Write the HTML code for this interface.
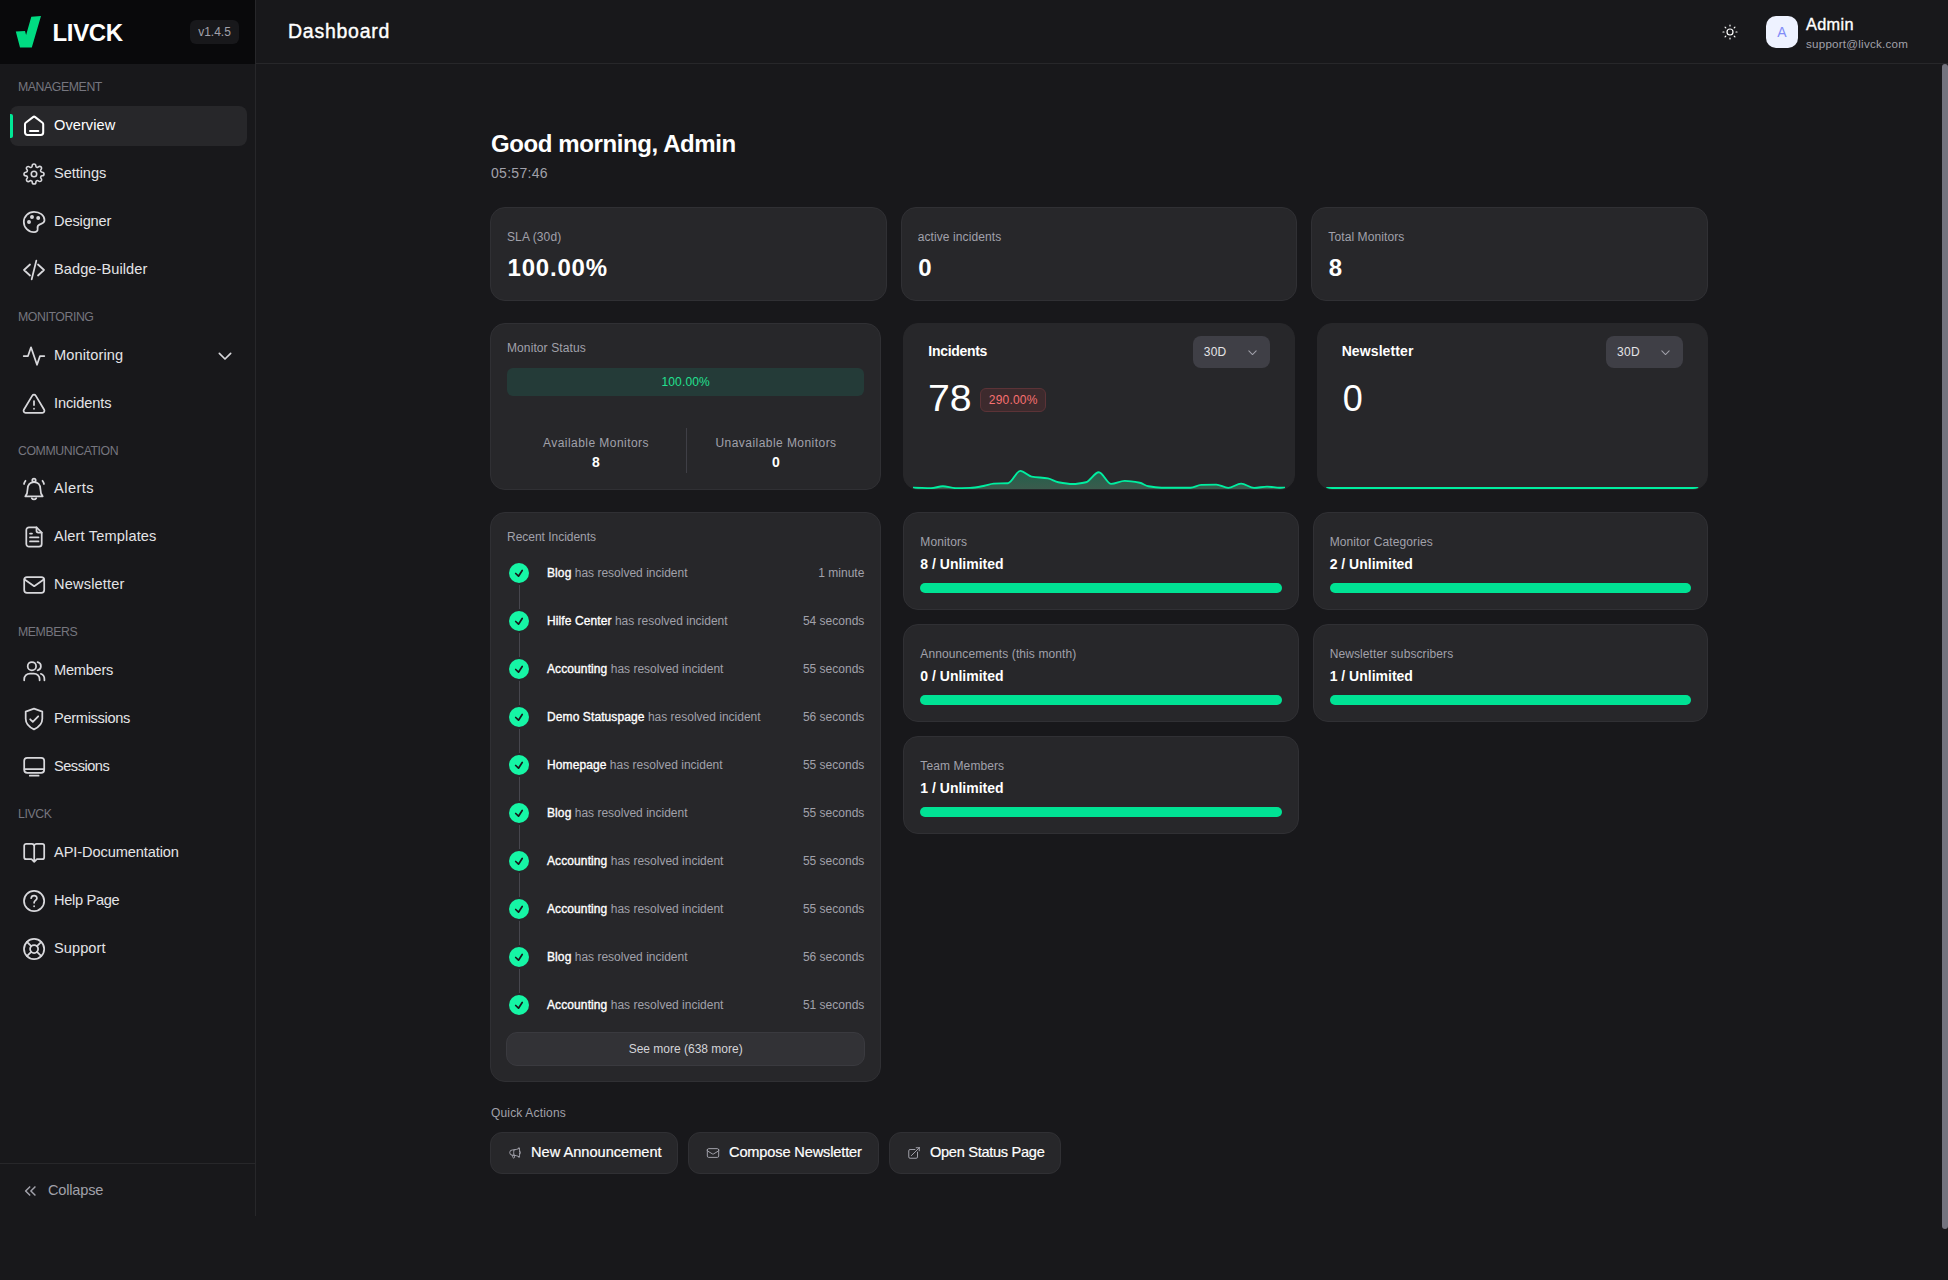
<!DOCTYPE html>
<html lang="en">
<head>
<meta charset="utf-8">
<title>LIVCK – Dashboard</title>
<style>
*{box-sizing:border-box;margin:0;padding:0}
html,body{width:1948px;height:1280px;overflow:hidden;background:#18181b}
body{position:relative;font-family:"Liberation Sans",Arial,sans-serif;color:#fff;-webkit-font-smoothing:antialiased}
svg{display:block}
.ico{width:24px;height:24px;fill:none;stroke:currentColor;stroke-width:1.75;stroke-linecap:round;stroke-linejoin:round;flex:none}

/* ---------- sidebar ---------- */
.sidebar{position:absolute;left:0;top:0;width:256px;height:1216px;border-right:1px solid #27272a;background:#18181b}
.brand{position:absolute;left:0;top:0;width:255px;height:64px;background:#09090b}
.brand .mark{position:absolute;left:0;top:0;width:64px;height:64px}
.brand .name{position:absolute;left:52.500px;top:18px;font-size:24px;line-height:30px;font-weight:700;letter-spacing:-.35px;color:#fff}
.brand .ver{position:absolute;left:190px;top:20px;width:49px;height:24px;border-radius:6px;background:#18181b;color:#a1a1aa;font-size:12px;line-height:24px;text-align:center}
.nav{position:absolute;left:0;top:64px;width:255px}
.nav h6{position:absolute;left:18px;font-size:12.300px;line-height:16px;font-weight:400;color:#76767f;letter-spacing:-.42px;margin-top:.7px;white-space:nowrap}
.nav a{position:absolute;left:10px;width:237px;height:40px;border-radius:8px;display:flex;align-items:center;padding-left:12px;color:#e4e4e7;font-size:14.6px;text-decoration:none;white-space:nowrap}
.nav a span{margin-left:8px;position:relative;top:-1px}
.nav a.active{background:#27272a;color:#fff}
.nav a>svg:first-child{color:#d8d8dc}
.nav a.active>svg:first-child{color:#fff}
.nav a.active:before{content:"";position:absolute;left:0;top:8px;width:3px;height:24px;border-radius:0 2px 2px 0;background:#00e896}
.nav a .chev{position:absolute;right:14px;top:12.200px;width:16px;height:16px;stroke-width:2.500;color:#d8d8dc}
.collapse{position:absolute;left:0;top:1163px;width:255px;height:53px;border-top:1px solid #27272a;color:#a1a1aa;font-size:14.6px}
.collapse svg{position:absolute;left:22.500px;top:19.500px;width:14px;height:14px;stroke-width:2.600}
.collapse span{position:absolute;left:48px;top:17px;line-height:18px;letter-spacing:-.2px}

/* ---------- topbar ---------- */
.topbar{position:absolute;left:256px;top:0;width:1692px;height:64px;border-bottom:1px solid #27272a}
.topbar h1{position:absolute;left:32px;top:19.400px;font-size:19.500px;line-height:24px;font-weight:400;color:#fff;-webkit-text-stroke:.4px #fff;letter-spacing:.75px}
.topbar .sun{position:absolute;left:1466px;top:24px;width:16px;height:16px;stroke-width:1.8}
.avatar{position:absolute;left:1510px;top:16px;width:32px;height:32px;border-radius:10px;background:#eef2ff;color:#818cf8;font-size:14px;line-height:32px;text-align:center}
.uname{position:absolute;left:1550px;top:14.500px;font-size:16.3px;line-height:18px;color:#fff;-webkit-text-stroke:.35px #fff;letter-spacing:.35px}
.umail{position:absolute;left:1550px;top:37px;font-size:11.6px;line-height:14px;color:#a1a1aa;letter-spacing:.23px}
.scroll{position:absolute;left:1942px;top:64px;width:6px;height:1165px;border-radius:3px;background:#73737e}

/* ---------- main ---------- */
.main{position:absolute;left:0;top:0;width:1948px;height:1280px;pointer-events:none}

.main .greet{position:absolute;left:491px;top:128px;font-size:24px;line-height:32px;font-weight:700;color:#fff;white-space:nowrap;letter-spacing:-.4px}
.main .clock{position:absolute;left:491px;top:164px;font-size:14px;line-height:18px;color:#a1a1aa;letter-spacing:.3px}
.card{position:absolute;background:#27272a;border:1px solid #303034;border-radius:15px}
.card .lbl{position:absolute;left:16px;font-size:12px;line-height:16px;color:#a1a1aa;white-space:nowrap;letter-spacing:.1px}
.card .big{position:absolute;left:16.500px;top:44px;font-size:24px;line-height:32px;font-weight:700;color:#fff;white-space:nowrap;letter-spacing:.8px}
.card .val{position:absolute;left:16px;top:41px;font-size:14px;line-height:20px;font-weight:700;color:#fff;white-space:nowrap}
.card .bar{position:absolute;left:16px;right:16px;top:70px;height:10px;border-radius:5px;background:#00e294}
.stat{top:207px;height:94px}
.stat .lbl{top:21px}
.use{height:98px}
.use .lbl{top:21px}
/* monitor status */
.ms .lbl{top:16px}
.ms .pbar{position:absolute;left:16px;right:16px;top:44px;height:28px;border-radius:6px;background:#243b38;color:#22e090;letter-spacing:.15px;font-size:12px;line-height:28px;text-align:center}
.ms .col{position:absolute;top:111px;width:178px;text-align:center}
.ms .col i{display:block;font-style:normal;font-size:12px;line-height:16px;color:#a1a1aa;letter-spacing:.45px}
.ms .col b{display:block;font-size:14px;line-height:20px;font-weight:700;color:#fff;margin-top:1px}
.ms .sep{position:absolute;left:195px;top:104px;width:1px;height:45px;background:#3f3f46}
/* chart cards */
.cc{border-color:#27272a;overflow:hidden}
.cc h3{position:absolute;left:24px;top:17px;font-size:14px;line-height:20px;font-weight:700;color:#fff;letter-spacing:-.3px}
.cc .sel{position:absolute;right:24px;top:12px;width:77px;letter-spacing:.3px;height:32px;border-radius:8px;background:#3f3f46;color:#e4e4e7;font-size:12px;line-height:32px;padding-left:11px}
.cc .sel svg{position:absolute;right:12px;top:10.500px;width:11px;height:11px;stroke:#a1a1aa;stroke-width:2.2}
.cc .num{position:absolute;left:24px;top:52.500px;font-size:36px;line-height:44px;font-weight:400;color:#fff;transform-origin:0 50%}
.cc .badge{position:absolute;left:76px;top:64px;height:24px;padding:0 7.500px;letter-spacing:.2px;border-radius:6px;border:1px solid #5c3337;background:#3d2a2d;color:#f87171;font-size:12px;line-height:22px}
.cc svg.spark{position:absolute;left:8.500px;top:0;width:372.500px;height:166px;overflow:hidden}
/* incidents list */
.ri .lbl{top:16px}
.ri .row{position:absolute;left:16px;right:16px;height:20px;font-size:12px;line-height:20px;color:#a1a1aa;white-space:nowrap}
.ri .row .dot{position:absolute;left:2px;top:0;width:20px;height:20px;border-radius:50%;background:#16f5a5}
.ri .row .dot svg{width:20px;height:20px;fill:none;stroke:#18181b;stroke-width:1.7;stroke-linecap:round;stroke-linejoin:round}
.ri .row .tx{position:absolute;left:40px;top:0}
.ri .row .tx b{color:#fff;font-weight:400;-webkit-text-stroke:.35px #fff;letter-spacing:.1px}
.ri .row .tm{position:absolute;right:0;top:0}
.ri .row .ln{position:absolute;left:11.500px;top:22px;width:1.500px;height:24px;background:#46464d}
.ri .more{position:absolute;left:15px;right:15px;top:519px;height:34px;border-radius:11px;border:1px solid #3a3a3f;background:#323236;color:#d4d4d8;font-size:12px;line-height:32px;text-align:center}
.qa{position:absolute;left:491px;top:1105px;font-size:12px;line-height:16px;color:#a1a1aa;letter-spacing:.17px}
.btn{position:absolute;top:1132px;height:42px;border-radius:12px;border:1px solid #303034;background:#27272a;color:#fff;font-size:14.6px;line-height:39px;padding-left:40px;white-space:nowrap;-webkit-text-stroke:.2px #fff}
.btn svg{position:absolute;left:17px;top:13px;width:14px;height:14px;fill:none;stroke:#a1a1aa;stroke-width:1.7;stroke-linecap:round;stroke-linejoin:round}
</style>
</head>
<body>

<aside class="sidebar">
  <div class="brand">
    <svg class="mark" viewBox="0 0 64 64"><polygon points="31.3,16.8 41,16 31.8,47.6 20,47.6 15.8,31.6 25,31 26.1,35" fill="#00dc82"/></svg>
    <div class="name">LIVCK</div>
    <div class="ver">v1.4.5</div>
  </div>
  <nav class="nav">
    <h6 style="top:14px">MANAGEMENT</h6>
    <a class="active" style="top:42px"><svg class="ico" viewBox="0 0 24 24" style="stroke-width:2.05"><path d="M3 10.200a1.800 1.800 0 0 1 .7-1.400l7.300-5.700a1.800 1.800 0 0 1 2.200 0l7.300 5.700a1.800 1.800 0 0 1 .7 1.400v8.400a2.400 2.400 0 0 1-2.400 2.400H5.400A2.400 2.400 0 0 1 3 18.600z"/><path d="M8 17h8.300"/></svg><span style="letter-spacing:0.06px">Overview</span></a>
    <a style="top:90px"><svg class="ico" viewBox="0 0 24 24"><g transform="translate(12 12) scale(.91) translate(-12 -12)" stroke-width="1.75"><circle cx="12" cy="12" r="3"/><path d="M19.4 15a1.650 1.650 0 0 0 .33 1.820l.06.06a2 2 0 0 1 0 2.830 2 2 0 0 1-2.830 0l-.06-.06a1.650 1.650 0 0 0-1.820-.33 1.650 1.650 0 0 0-1 1.510V21a2 2 0 0 1-2 2 2 2 0 0 1-2-2v-.09A1.650 1.650 0 0 0 9 19.4a1.650 1.650 0 0 0-1.820.33l-.06.06a2 2 0 0 1-2.830 0 2 2 0 0 1 0-2.830l.06-.06a1.650 1.650 0 0 0 .33-1.820 1.650 1.650 0 0 0-1.510-1H3a2 2 0 0 1-2-2 2 2 0 0 1 2-2h.09A1.650 1.650 0 0 0 4.600 9a1.650 1.650 0 0 0-.33-1.820l-.06-.06a2 2 0 0 1 0-2.830 2 2 0 0 1 2.830 0l.06.06a1.650 1.650 0 0 0 1.820.33H9a1.650 1.650 0 0 0 1-1.510V3a2 2 0 0 1 2-2 2 2 0 0 1 2 2v.09a1.650 1.650 0 0 0 1 1.510 1.650 1.650 0 0 0 1.820-.33l.06-.06a2 2 0 0 1 2.830 0 2 2 0 0 1 0 2.830l-.06.06a1.650 1.650 0 0 0-.33 1.820V9a1.650 1.650 0 0 0 1.510 1H21a2 2 0 0 1 2 2 2 2 0 0 1-2 2h-.09a1.650 1.650 0 0 0-1.510 1z"/></g></svg><span style="letter-spacing:-0.07px">Settings</span></a>
    <a style="top:138px"><svg class="ico" viewBox="0 0 24 24"><path d="M12 1.800C6.300 1.800 1.800 6.400 1.800 12S6.400 22.200 12 22.200c2.700 0 3.900-1.500 3.600-3.400-.4-2.200.3-3.600 2.200-4.400 2.300-.9 4.700-1.400 4.700-4.200C22.500 5.300 17.800 1.800 12 1.800Z"/><circle cx="10" cy="7" r="1.100" fill="currentColor"/><circle cx="16.200" cy="8" r="1.100" fill="currentColor"/><circle cx="7" cy="12" r="1.100" fill="currentColor"/></svg><span style="letter-spacing:-0.14px">Designer</span></a>
    <a style="top:186px"><svg class="ico" viewBox="0 0 24 24"><path d="M8 6.500 2 12l6 5.500M16 6.500 22 12l-6 5.500M14.300 2.700 9.700 21.300"/></svg><span style="letter-spacing:0.07px">Badge-Builder</span></a>

    <h6 style="top:244px">MONITORING</h6>
    <a style="top:272px"><svg class="ico" viewBox="0 0 24 24"><path d="M1.700 12H6l3-8.700L15 20.800 18 12h4.300"/></svg><span style="letter-spacing:0.12px">Monitoring</span><svg class="ico chev" viewBox="0 0 24 24"><path d="m3.500 8 8.500 8.500L20.500 8"/></svg></a>
    <a style="top:320px"><svg class="ico" viewBox="0 0 24 24"><g transform="translate(0 -.2)"><path d="M10.290 3.860 1.820 18a2 2 0 0 0 1.710 3h16.940a2 2 0 0 0 1.710-3L13.710 3.860a2 2 0 0 0-3.420 0z"/><path d="M12 9.200v4.100M12 16.900v.1"/></g></svg><span style="letter-spacing:-0.12px">Incidents</span></a>

    <h6 style="top:378px">COMMUNICATION</h6>
    <a style="top:405px"><svg class="ico" viewBox="0 0 24 24"><circle cx="12" cy="3.300" r="1.700"/><path d="M3.300 19.300h17.400c-1.800-2-2.300-4.300-2.300-7.300 0-4.300-2.600-7-6.400-7s-6.400 2.700-6.400 7c0 3-.5 5.300-2.300 7.300Z"/><path d="M9.800 21.200c.5.800 1.300 1.200 2.200 1.200s1.700-.4 2.200-1.200"/><path d="M3.500 3.800C2.700 4.700 2.200 5.800 2 7M20.500 3.800c.8.900 1.300 2 1.500 3.200"/></svg><span style="letter-spacing:0.47px">Alerts</span></a>
    <a style="top:453px"><svg class="ico" viewBox="0 0 24 24"><path d="M14.500 2.300H7A2.700 2.700 0 0 0 4.300 5v14A2.700 2.700 0 0 0 7 21.700h10a2.700 2.700 0 0 0 2.700-2.700V7.500Z"/><path d="M14.500 2.300v3.500a1.700 1.700 0 0 0 1.700 1.700h3.500"/><path d="M8 8.600h2M8 12.400h8.500M8 16.400h8.500"/></svg><span style="letter-spacing:0.15px">Alert Templates</span></a>
    <a style="top:501px"><svg class="ico" viewBox="0 0 24 24"><rect x="2.200" y="4" width="20" height="15.800" rx="2.800"/><path d="m2.600 6.500 9.600 6.700 9.600-6.700"/></svg><span style="letter-spacing:0.17px">Newsletter</span></a>

    <h6 style="top:559px">MEMBERS</h6>
    <a style="top:587px"><svg class="ico" viewBox="0 0 24 24"><circle cx="9.900" cy="7.200" r="4.200"/><path d="M2.200 21.300v-1a5.800 5.800 0 0 1 5.800-5.800h3.800a5.800 5.800 0 0 1 5.800 5.800v1"/><path d="M15.600 3.100a4.200 4.200 0 0 1 0 8.200"/><path d="M18.800 14.800a5.600 5.600 0 0 1 3.600 5.500v1"/></svg><span style="letter-spacing:-0.25px">Members</span></a>
    <a style="top:635px"><svg class="ico" viewBox="0 0 24 24"><path d="M12 1.700 20.300 4.600v7.200c0 5-3.600 8.400-8.300 10.600-4.700-2.200-8.300-5.600-8.300-10.600V4.600Z"/><path d="m8.200 12.300 2.600 2.600 5.400-5.600"/></svg><span style="letter-spacing:-0.31px">Permissions</span></a>
    <a style="top:683px"><svg class="ico" viewBox="0 0 24 24"><rect x="2.200" y="2.800" width="20" height="15" rx="3"/><path d="M2.500 14.100h19.400M7.800 20.700h8.800"/></svg><span style="letter-spacing:-0.49px">Sessions</span></a>

    <h6 style="top:741px">LIVCK</h6>
    <a style="top:769px"><svg class="ico" viewBox="0 0 24 24"><path d="M12.200 20.800V5.200a2.400 2.400 0 0 0-2.400-2.400H4.200a2 2 0 0 0-2 2v11.400a2 2 0 0 0 2 2h5.300l2.700 2.600 2.700-2.600h5.300a2 2 0 0 0 2-2V4.800a2 2 0 0 0-2-2h-5.600a2.400 2.400 0 0 0-2.400 2.400"/></svg><span style="letter-spacing:-0.10px">API-Documentation</span></a>
    <a style="top:817px"><svg class="ico" viewBox="0 0 24 24"><circle cx="12.100" cy="11.900" r="10.100"/><path d="M9.200 9.200c.2-3.600 5.800-3.500 5.700 0-.1 2.300-2.800 2.200-2.800 4.600M12.100 17.200v.1"/></svg><span style="letter-spacing:-0.31px">Help Page</span></a>
    <a style="top:865px"><svg class="ico" viewBox="0 0 24 24"><circle cx="12.100" cy="12" r="10.100"/><circle cx="12.100" cy="12" r="4"/><path d="m4.900 4.900 4.300 4.300M19.300 4.900 15 9.200M4.900 19.100l4.300-4.300M19.300 19.100 15 14.800"/></svg><span style="letter-spacing:0.07px">Support</span></a>
  </nav>
  <div class="collapse"><svg class="ico" viewBox="0 0 24 24"><path d="m11.500 5-7 7 7 7M20.500 5l-7 7 7 7"/></svg><span>Collapse</span></div>
</aside>

<header class="topbar">
  <h1>Dashboard</h1>
  <svg class="ico sun" viewBox="0 0 24 24"><circle cx="12" cy="12" r="4.500"/><path d="M12 1.500v1.500M12 21v1.500M1.500 12H3M21 12h1.500M4.600 4.600l1.100 1.100M18.300 18.300l1.100 1.100M4.600 19.400l1.100-1.100M18.300 5.700l1.100-1.100"/></svg>
  <div class="avatar">A</div>
  <div class="uname">Admin</div>
  <div class="umail">support@livck.com</div>
</header>
<div class="scroll"></div>

<main class="main">

  <div class="greet">Good morning, Admin</div>
  <div class="clock">05:57:46</div>

  <section class="card stat" style="left:490px;width:396.670px"><div class="lbl">SLA (30d)</div><div class="big">100.00%</div></section>
  <section class="card stat" style="left:900.670px;width:396.670px"><div class="lbl">active incidents</div><div class="big">0</div></section>
  <section class="card stat" style="left:1311.330px;width:396.670px"><div class="lbl">Total Monitors</div><div class="big">8</div></section>

  <section class="card ms" style="left:490px;top:323px;width:391.330px;height:166.500px">
    <div class="lbl">Monitor Status</div>
    <div class="pbar">100.00%</div>
    <div class="col" style="left:16px"><i>Available Monitors</i><b>8</b></div>
    <div class="sep"></div>
    <div class="col" style="left:196px"><i>Unavailable Monitors</i><b>0</b></div>
  </section>

  <section class="card cc" style="left:903.330px;top:323px;width:391.330px;height:166.500px">
    <h3>Incidents</h3>
    <div class="sel">30D<svg class="ico" viewBox="0 0 24 24"><path d="m4 8.500 8 8 8-8"/></svg></div>
    <div class="num" style="transform:scaleX(1.09)">78</div>
    <div class="badge">290.00%</div>
    <svg class="spark"><defs><linearGradient id="sg" gradientUnits="userSpaceOnUse" x1="0" y1="146" x2="0" y2="166"><stop offset="0" stop-color="rgb(16,240,160)" stop-opacity=".29"/><stop offset="1" stop-color="rgb(117,237,174)" stop-opacity=".26"/></linearGradient></defs><g transform="translate(-8.500 0)"><path d="M0.4 163.8C3.1 163.8 5.8 163.7 8.5 163.7C14.5 163.7 20.5 164.1 26.5 164.1C30.4 164.1 34.3 162.3 38.3 162.3C42.5 162.3 46.8 164.1 51.1 164.1C55.9 164.1 60.7 164.0 65.5 163.9C70.3 163.8 75.1 162.7 79.9 161.8C82.9 161.2 86.0 159.8 89.1 159.6C93.9 159.3 98.7 159.5 103.5 159.2C107.6 159.0 111.7 146.9 115.8 146.9C119.5 146.9 123.3 151.9 127.1 152.6C132.5 153.6 138.0 153.4 143.5 154.4C146.9 155.0 150.3 157.5 153.8 158.2C158.6 159.1 163.4 160.0 168.2 160.0C172.6 160.0 177.0 159.2 181.5 158.2C185.7 157.2 190.0 148.2 194.3 148.2C198.4 148.2 202.5 159.9 206.7 159.9C211.2 159.9 215.7 156.9 220.2 156.9C225.2 156.9 230.2 157.8 235.3 158.8C238.1 159.4 241.0 161.8 243.9 162.3C248.2 163.1 252.5 163.7 256.9 163.7C261.8 163.7 266.7 163.7 271.7 163.7C276.4 163.7 281.2 163.7 286.0 163.7C289.5 163.7 293.1 161.0 296.7 160.9C301.7 160.7 306.7 160.6 311.8 160.6C315.7 160.6 319.7 163.9 323.7 163.9C328.0 163.9 332.3 159.6 336.6 159.6C340.9 159.6 345.2 163.9 349.6 163.9C353.9 163.9 358.2 162.6 362.5 162.6C366.8 162.6 371.1 163.7 375.4 163.7C379.7 163.7 384.0 163.5 388.3 163.4L388.3 170L0.4 170Z" fill="url(#sg)" stroke="none"/><path d="M0.4 163.8C3.1 163.8 5.8 163.7 8.5 163.7C14.5 163.7 20.5 164.1 26.5 164.1C30.4 164.1 34.3 162.3 38.3 162.3C42.5 162.3 46.8 164.1 51.1 164.1C55.9 164.1 60.7 164.0 65.5 163.9C70.3 163.8 75.1 162.7 79.9 161.8C82.9 161.2 86.0 159.8 89.1 159.6C93.9 159.3 98.7 159.5 103.5 159.2C107.6 159.0 111.7 146.9 115.8 146.9C119.5 146.9 123.3 151.9 127.1 152.6C132.5 153.6 138.0 153.4 143.5 154.4C146.9 155.0 150.3 157.5 153.8 158.2C158.6 159.1 163.4 160.0 168.2 160.0C172.6 160.0 177.0 159.2 181.5 158.2C185.7 157.2 190.0 148.2 194.3 148.2C198.4 148.2 202.5 159.9 206.7 159.9C211.2 159.9 215.7 156.9 220.2 156.9C225.2 156.9 230.2 157.8 235.3 158.8C238.1 159.4 241.0 161.8 243.9 162.3C248.2 163.1 252.5 163.7 256.9 163.7C261.8 163.7 266.7 163.7 271.7 163.7C276.4 163.7 281.2 163.7 286.0 163.7C289.5 163.7 293.1 161.0 296.7 160.9C301.7 160.7 306.7 160.6 311.8 160.6C315.7 160.6 319.7 163.9 323.7 163.9C328.0 163.9 332.3 159.6 336.6 159.6C340.9 159.6 345.2 163.9 349.6 163.9C353.9 163.9 358.2 162.6 362.5 162.6C366.8 162.6 371.1 163.7 375.4 163.7C379.7 163.7 384.0 163.5 388.3 163.4" fill="none" stroke="#00eea0" stroke-width="1.9" stroke-linecap="round" stroke-linejoin="round"/></g></svg>
  </section>

  <section class="card cc" style="left:1316.670px;top:323px;width:391.330px;height:166.500px">
    <h3 style="letter-spacing:.1px">Newsletter</h3>
    <div class="sel">30D<svg class="ico" viewBox="0 0 24 24"><path d="m4 8.500 8 8 8-8"/></svg></div>
    <div class="num" style="left:25px">0</div>
    <svg class="spark"><path d="M1 164H371.500" fill="none" stroke="#00eea0" stroke-width="2" stroke-linecap="round"/></svg>
  </section>

  <section class="card ri" style="left:490px;top:512px;width:391.330px;height:569.500px">
    <div class="lbl" style="letter-spacing:-.02px">Recent Incidents</div>
    <div class="row" style="top:50px"><span class="dot"><svg viewBox="0 0 20 20"><path d="m6.700 10.500 2.800 2.700 3.700-5.700"/></svg></span><span class="ln"></span><span class="tx"><b>Blog</b> has resolved incident</span><span class="tm">1 minute</span></div>
    <div class="row" style="top:98px"><span class="dot"><svg viewBox="0 0 20 20"><path d="m6.700 10.500 2.800 2.700 3.700-5.700"/></svg></span><span class="ln"></span><span class="tx"><b>Hilfe Center</b> has resolved incident</span><span class="tm">54 seconds</span></div>
    <div class="row" style="top:146px"><span class="dot"><svg viewBox="0 0 20 20"><path d="m6.700 10.500 2.800 2.700 3.700-5.700"/></svg></span><span class="ln"></span><span class="tx"><b>Accounting</b> has resolved incident</span><span class="tm">55 seconds</span></div>
    <div class="row" style="top:194px"><span class="dot"><svg viewBox="0 0 20 20"><path d="m6.700 10.500 2.800 2.700 3.700-5.700"/></svg></span><span class="ln"></span><span class="tx"><b>Demo Statuspage</b> has resolved incident</span><span class="tm">56 seconds</span></div>
    <div class="row" style="top:242px"><span class="dot"><svg viewBox="0 0 20 20"><path d="m6.700 10.500 2.800 2.700 3.700-5.700"/></svg></span><span class="ln"></span><span class="tx"><b>Homepage</b> has resolved incident</span><span class="tm">55 seconds</span></div>
    <div class="row" style="top:290px"><span class="dot"><svg viewBox="0 0 20 20"><path d="m6.700 10.500 2.800 2.700 3.700-5.700"/></svg></span><span class="ln"></span><span class="tx"><b>Blog</b> has resolved incident</span><span class="tm">55 seconds</span></div>
    <div class="row" style="top:338px"><span class="dot"><svg viewBox="0 0 20 20"><path d="m6.700 10.500 2.800 2.700 3.700-5.700"/></svg></span><span class="ln"></span><span class="tx"><b>Accounting</b> has resolved incident</span><span class="tm">55 seconds</span></div>
    <div class="row" style="top:386px"><span class="dot"><svg viewBox="0 0 20 20"><path d="m6.700 10.500 2.800 2.700 3.700-5.700"/></svg></span><span class="ln"></span><span class="tx"><b>Accounting</b> has resolved incident</span><span class="tm">55 seconds</span></div>
    <div class="row" style="top:434px"><span class="dot"><svg viewBox="0 0 20 20"><path d="m6.700 10.500 2.800 2.700 3.700-5.700"/></svg></span><span class="ln"></span><span class="tx"><b>Blog</b> has resolved incident</span><span class="tm">56 seconds</span></div>
    <div class="row" style="top:482px"><span class="dot"><svg viewBox="0 0 20 20"><path d="m6.700 10.500 2.800 2.700 3.700-5.700"/></svg></span><span class="tx"><b>Accounting</b> has resolved incident</span><span class="tm">51 seconds</span></div>
    <div class="more">See more (638 more)</div>
  </section>

  <section class="card use" style="left:903.330px;top:512px;width:395.330px"><div class="lbl">Monitors</div><div class="val">8 / Unlimited</div><div class="bar"></div></section>
  <section class="card use" style="left:1312.670px;top:512px;width:395.330px"><div class="lbl">Monitor Categories</div><div class="val">2 / Unlimited</div><div class="bar"></div></section>
  <section class="card use" style="left:903.330px;top:624px;width:395.330px"><div class="lbl">Announcements (this month)</div><div class="val">0 / Unlimited</div><div class="bar"></div></section>
  <section class="card use" style="left:1312.670px;top:624px;width:395.330px"><div class="lbl">Newsletter subscribers</div><div class="val">1 / Unlimited</div><div class="bar"></div></section>
  <section class="card use" style="left:903.330px;top:736px;width:395.330px"><div class="lbl">Team Members</div><div class="val">1 / Unlimited</div><div class="bar"></div></section>

  <div class="qa">Quick Actions</div>
  <div class="btn" style="left:490px;width:188px"><svg viewBox="0 0 24 24"><path d="M10.34 15.840c-.688-.06-1.386-.09-2.090-.09H7.500a4.500 4.500 0 1 1 0-9h.75c.704 0 1.402-.03 2.090-.09m0 9.180c.253.962.584 1.892.985 2.783.247.55.06 1.210-.463 1.511l-.657.38c-.551.318-1.260.117-1.527-.461a20.845 20.845 0 0 1-1.440-4.282m3.102.069a18.030 18.030 0 0 1-.59-4.590c0-1.586.205-3.124.59-4.590m0 9.180a23.848 23.848 0 0 1 8.835 2.535M10.340 6.660a23.847 23.847 0 0 0 8.835-2.535m0 0A23.740 23.740 0 0 0 18.795 3m.38 1.125a23.910 23.910 0 0 1 1.014 5.395m-1.014 8.855c-.118.38-.245.754-.38 1.125m.38-1.125a23.910 23.910 0 0 0 1.014-5.395m0-3.460c.495.413.811 1.035.811 1.730 0 .695-.316 1.317-.811 1.730m0-3.460a24.347 24.347 0 0 1 0 3.460"/></svg>New Announcement</div>
  <div class="btn" style="left:688px;width:191px"><svg viewBox="0 0 24 24"><path d="M21.750 6.750v10.500a2.250 2.250 0 0 1-2.250 2.250h-15a2.250 2.250 0 0 1-2.250-2.250V6.750m19.500 0A2.250 2.250 0 0 0 19.500 4.500h-15a2.250 2.250 0 0 0-2.250 2.250m19.500 0v.243a2.250 2.250 0 0 1-1.070 1.916l-7.500 4.615a2.250 2.250 0 0 1-2.360 0L3.320 8.910a2.250 2.250 0 0 1-1.070-1.916V6.750"/></svg><span style="letter-spacing:-.15px">Compose Newsletter</span></div>
  <div class="btn" style="left:889px;width:172px"><svg viewBox="0 0 24 24"><path d="M13.500 6H5.250A2.250 2.250 0 0 0 3 8.250v10.500A2.250 2.250 0 0 0 5.250 21h10.500A2.250 2.250 0 0 0 18 18.750V10.500m-10.500 6L21 3m0 0h-5.250M21 3v5.250"/></svg><span style="letter-spacing:-.3px">Open Status Page</span></div>

</main>

</body>
</html>
